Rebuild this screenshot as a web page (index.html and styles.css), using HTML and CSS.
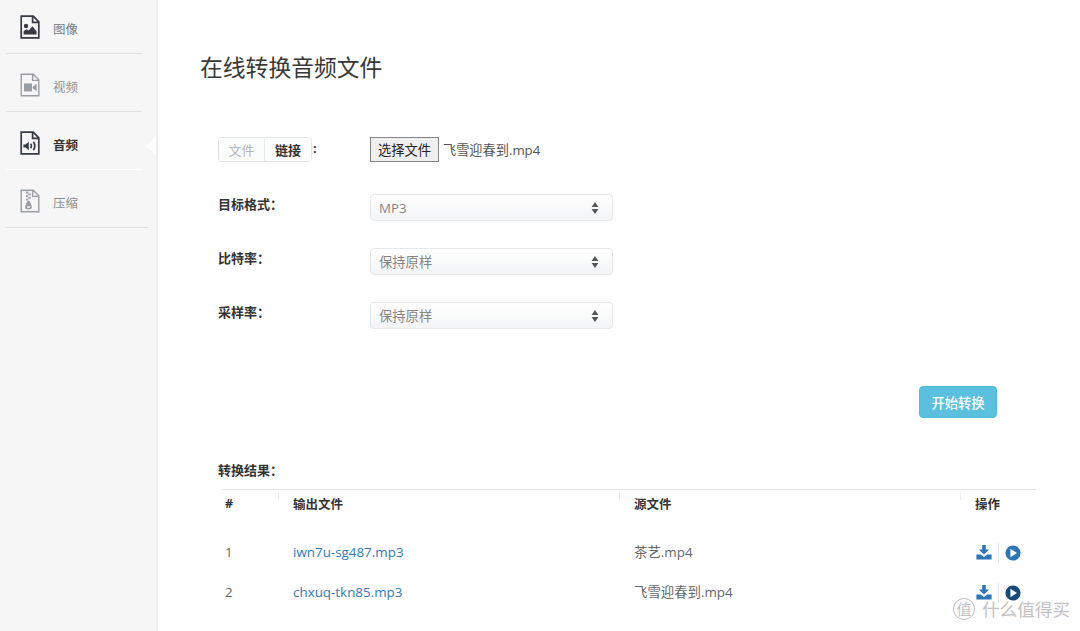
FILE: index.html
```html
<!DOCTYPE html>
<html lang="zh-CN">
<head>
    <meta charset="UTF-8">
    <meta name="viewport" content="width=device-width, initial-scale=1.0">
    <title>在线转换音频文件</title>
    <link rel="stylesheet" href="styles.css">
</head>
<body>

    <nav class="sidebar">
        <a class="side-item image">
            <svg class="side-icon" viewBox="0 0 20 24">
                <path class="line" d="M1.2 1.2h12l5.6 5.6v16H1.2zM12.6 1.2v6.2h6.2"/>
                <circle cx="6" cy="11" r="2.2"/>
                <path d="M3.6 19.4v-3.2l2.8-2 2.2 1.4 3.8-4.4 4.2 5v3.2z"/>
            </svg>
            <span>图像</span>
        </a>
        <a class="side-item video">
            <svg class="side-icon" viewBox="0 0 20 24">
                <path class="line" d="M1.2 1.2h12l5.6 5.6v16H1.2zM12.6 1.2v6.2h6.2"/>
                <path d="M4 10.6h8v7.8H4zM12.6 14l4-3.4v7.8l-4-3.4z"/>
            </svg>
            <span>视频</span>
        </a>
        <a class="side-item audio active">
            <svg class="side-icon" viewBox="0 0 20 24">
                <path class="line" d="M1.2 1.2h12l5.6 5.6v16H1.2zM12.6 1.2v6.2h6.2"/>
                <path d="M3.4 13.4h2.2l3.2-2.6v8.4l-3.2-2.6H3.4z"/>
                <path class="wave" d="M10.8 12.6q1.3 2.4 0 4.8M13.4 10.8q2.8 4.2 0 8.4"/>
            </svg>
            <span>音频</span>
        </a>
        <a class="side-item archive">
            <svg class="side-icon" viewBox="0 0 20 24">
                <path class="line" d="M1.2 1.2h12l5.6 5.6v16H1.2zM12.6 1.2v6.2h6.2"/>
                <path d="M6 2.6h2.4v1.8H6zM8.4 4.4h2.4v1.8H8.4zM6 6.2h2.4V8H6zM8.4 8h2.4v1.8H8.4zM6 9.8h2.4v1.8H6z"/>
                <path fill-rule="evenodd" d="M7.2 12h2.6l2 5.2q.6 3.2-3.3 3.2t-3.3-3.2zM7 17.2v1.6h3v-1.6z"/>
            </svg>
            <span>压缩</span>
        </a>
    </nav>

    <main class="content">
        <h1>在线转换音频文件</h1>

        <form class="convert-form">
            <div class="form-row source-row">
                <div class="form-label">
                    <span class="tabs"><button type="button" class="tab">文件</button><button type="button" class="tab active">链接</button></span><span class="colon">:</span>
                </div>
                <div class="file-input">
                    <button type="button">选择文件</button>
                    <span>飞雪迎春到.mp4</span>
                </div>
            </div>
            <div class="form-row">
                <label class="form-label">目标格式：</label>
                <div class="select">MP3 <svg class="arrows" viewBox="0 0 8 12"><path d="M4 0l3.4 5H.6zM4 12L.6 7h6.8z"/></svg></div>
            </div>
            <div class="form-row">
                <label class="form-label">比特率：</label>
                <div class="select">保持原样 <svg class="arrows" viewBox="0 0 8 12"><path d="M4 0l3.4 5H.6zM4 12L.6 7h6.8z"/></svg></div>
            </div>
            <div class="form-row">
                <label class="form-label">采样率：</label>
                <div class="select">保持原样 <svg class="arrows" viewBox="0 0 8 12"><path d="M4 0l3.4 5H.6zM4 12L.6 7h6.8z"/></svg></div>
            </div>
            <button type="button" class="start-btn">开始转换</button>
        </form>

        <h2>转换结果：</h2>
        <table class="results">
            <thead>
                <tr>
                    <th class="num">#</th>
                    <th class="output">输出文件</th>
                    <th class="source">源文件</th>
                    <th class="action">操作</th>
                </tr>
            </thead>
            <tbody>
                <tr>
                    <td>1</td>
                    <td><a>iwn7u-sg487.mp3</a></td>
                    <td>茶艺.mp4</td>
                    <td>
                        <div class="actions">
                            <svg class="download" viewBox="0 0 16 15"><path d="M6.2 0h3.6v4.6h3.4L8 9.6 2.8 4.6h3.4z"/><path d="M.4 9.6h4.4L8 12l3.2-2.4h4.4v4.8H.4z"/></svg>
                            <svg class="play" viewBox="0 0 16 16"><path fill-rule="evenodd" d="M8 .4a7.6 7.6 0 1 1 0 15.2A7.6 7.6 0 0 1 8 .4zM5.4 3.8v8.4L12 8z"/></svg>
                        </div>
                    </td>
                </tr>
                <tr>
                    <td>2</td>
                    <td><a>chxuq-tkn85.mp3</a></td>
                    <td>飞雪迎春到.mp4</td>
                    <td>
                        <div class="actions">
                            <svg class="download" viewBox="0 0 16 15"><path d="M6.2 0h3.6v4.6h3.4L8 9.6 2.8 4.6h3.4z"/><path d="M.4 9.6h4.4L8 12l3.2-2.4h4.4v4.8H.4z"/></svg>
                            <svg class="play dark" viewBox="0 0 16 16"><path fill-rule="evenodd" d="M8 .4a7.6 7.6 0 1 1 0 15.2A7.6 7.6 0 0 1 8 .4zM5.4 3.8v8.4L12 8z"/></svg>
                        </div>
                    </td>
                </tr>
            </tbody>
        </table>
    </main>

    <div class="watermark"><span class="mark">值</span><span>什么值得买</span></div>

</body>
</html>
```

FILE: styles.css
```css
* {
    box-sizing: border-box;
}

body {
    margin: 0;
    height: 631px;
    display: flex;
    overflow: hidden;
    position: relative;
    background: #fff;
    color: #666;
    font-family: "Open Sans", "Noto Sans CJK SC", sans-serif;
    font-size: 13px;
}

button {
    font-family: inherit;
    padding: 0;
}

/* Sidebar */
.sidebar {
    width: 158px;
    flex: none;
    background: #f6f6f6;
    border-right: 2px solid #eeeeee;
    padding: 0 9px 0 6px;
}

.side-item {
    display: flex;
    align-items: center;
    gap: 13px;
    height: 58px;
    width: 136px;
    padding: 7px 0 0 14px;
    font-size: 12.5px;
    color: #777b7e;
    border-bottom: 1px solid #dfdfdf;
    position: relative;
}

.side-item.image {
    height: 54px;
    padding-top: 3px;
}

.side-item.video,
.side-item.archive {
    color: #8d9194;
}

.side-item.archive {
    width: 142px;
}

.side-item.active {
    color: #333;
    font-weight: bold;
    border-bottom-color: #fff;
}

/* notch pointing at the current section */
.side-item.active::after {
    content: "";
    position: absolute;
    left: 140px;
    top: 24px;
    border: 10px solid transparent;
    border-left: 0;
    border-right-color: #fff;
}

.side-icon {
    width: 20px;
    height: 24px;
    margin-top: -3px;
    fill: #999ea3;
    stroke: none;
}

.side-icon .line,
.side-icon .wave {
    fill: none;
    stroke: #999ea3;
    stroke-width: 1.4;
}

.image .side-icon,
.active .side-icon {
    fill: #373b43;
}

.image .line,
.active .line,
.active .wave {
    stroke: #373b43;
    stroke-width: 1.7;
}

/* Content */
.content {
    width: 922px;
    padding: 50px 43px 0 60px;
}

h1 {
    margin: 0 0 0 -18px;
    font-size: 22.8px;
    font-weight: normal;
    line-height: 36px;
    color: #383838;
}

h2 {
    margin: 42px 0 0;
    font-size: 13px;
    line-height: 20px;
    color: #333;
}

.convert-form {
    display: flex;
    flex-direction: column;
    padding-top: 51px;
}

.form-row {
    display: flex;
    height: 54px;
    padding-top: 4px;
}

.source-row {
    height: 53px;
    padding-top: 0;
}

.form-label {
    width: 152px;
    line-height: 20px;
    font-weight: bold;
    color: #333;
}

.tabs {
    display: inline-flex;
    height: 25px;
    border: 1px solid #e2e4e6;
    border-radius: 4px;
    overflow: hidden;
    vertical-align: middle;
}

.tab {
    width: 46px;
    border: 0;
    border-right: 1px solid #e8eaeb;
    background: #fbfcfc;
    font-size: 13px;
    color: #b5b7b9;
}

.tab.active {
    border-right: 0;
    color: #333;
    font-weight: bold;
}

.colon {
    margin-left: 1px;
}

.file-input {
    display: flex;
    height: 25px;
    align-items: center;
    gap: 4px;
    font-size: 13.2px;
    color: #555;
}

.file-input button {
    width: 69px;
    height: 25px;
    border: 1px solid #858585;
    background: #efefef;
    font-size: 13.3px;
    color: #222;
}

.select {
    display: flex;
    align-items: center;
    justify-content: space-between;
    width: 243px;
    height: 27px;
    padding: 0 13px 0 8px;
    border: 1px solid #e6e8e9;
    border-radius: 4px;
    background: linear-gradient(#fff, #f3f4f5);
    font-size: 13.3px;
    color: #858585;
}

.arrows {
    width: 8px;
    height: 12px;
    fill: #555;
}

.start-btn {
    align-self: flex-end;
    width: 78px;
    height: 32px;
    margin: 34px 40px 0 0;
    border: 1px solid #52bbda;
    border-radius: 4px;
    background: #5bc0de;
    color: #fff;
    font-size: 13.3px;
    font-weight: 500;
}

/* Results */
.results {
    width: 814px;
    margin: 9px 0 0 4px;
    border-collapse: collapse;
    border-top: 1px solid #e6e6e6;
    table-layout: fixed;
}

.results th,
.results td {
    padding: 0 0 0 15px;
    text-align: left;
}

.results th {
    height: 28px;
    font-size: 12.5px;
    color: #333;
    background: linear-gradient(#ececec, #ececec) no-repeat 0 2px / 1px 8px;
}

.results th.num {
    width: 56px;
    background: none;
}

.results th.num,
.results td:first-child {
    padding-left: 3px;
}

.output {
    width: 341px;
}

.source {
    width: 341px;
}

.results td {
    height: 40px;
    font-size: 13.4px;
    line-height: 18px;
}

.results tbody::before {
    content: "";
    display: block;
    height: 14px;
}

.results a {
    color: #337ab7;
}

.actions {
    display: flex;
    align-items: center;
    padding: 2px 0 0 1px;
}

.actions svg {
    fill: #2d75b3;
}

.download {
    width: 16px;
    height: 15px;
}

.play {
    box-sizing: content-box;
    width: 16px;
    height: 16px;
    margin-left: 6px;
    padding: 2px 0 2px 6px;
    border-left: 1px solid #e4e4e4;
}

.actions .play.dark {
    fill: #17497b;
}

/* Watermark */
.watermark {
    position: absolute;
    left: 953px;
    top: 596px;
    display: flex;
    align-items: center;
    gap: 7px;
    height: 25px;
    font-size: 17.6px;
    white-space: nowrap;
    color: #c2c2c2;
}

.mark {
    width: 22px;
    height: 22px;
    border: 1px solid #bdbdbd;
    border-radius: 50%;
    font-size: 15px;
    line-height: 20px;
    text-align: center;
}
```
